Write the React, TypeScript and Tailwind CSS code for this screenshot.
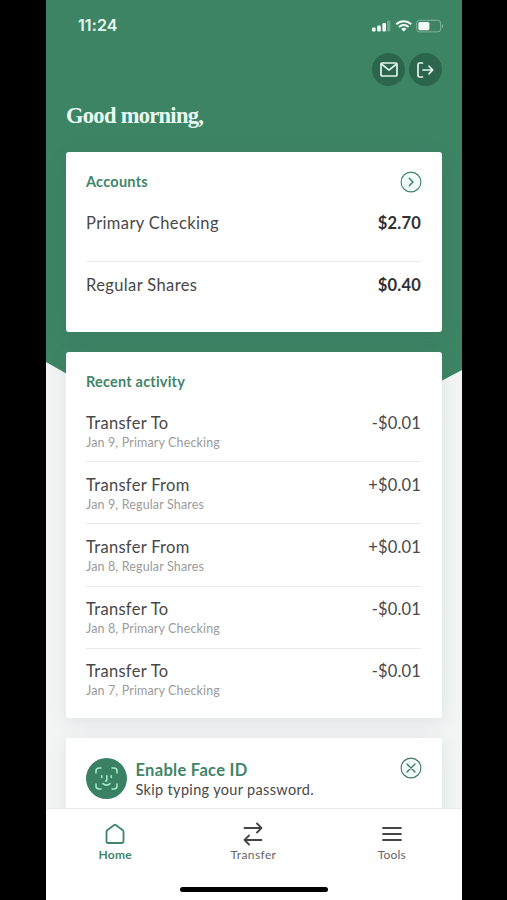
import type { ReactNode } from 'react';

const accounts = [
  { name: 'Primary Checking', balance: '$2.70' },
  { name: 'Regular Shares', balance: '$0.40' },
];

const activity = [
  { title: 'Transfer To', detail: 'Jan 9, Primary Checking', amount: '-$0.01' },
  { title: 'Transfer From', detail: 'Jan 9, Regular Shares', amount: '+$0.01' },
  { title: 'Transfer From', detail: 'Jan 8, Regular Shares', amount: '+$0.01' },
  { title: 'Transfer To', detail: 'Jan 8, Primary Checking', amount: '-$0.01' },
  { title: 'Transfer To', detail: 'Jan 7, Primary Checking', amount: '-$0.01' },
];

function StatusBar() {
  return (
    <div className="flex h-[52px] shrink-0 items-start justify-between pl-8 pr-[18px] pt-[13px]">
      <span className="font-['Inter',sans-serif] text-[16px] font-semibold leading-6 tracking-[0.1px] text-[#e6f8ee]">11:24</span>
      <svg width="74" height="16" viewBox="0 0 74 16" className="mt-[5px] text-[#f2fbf6]" fill="currentColor">
        <rect x="2" y="9.5" width="3.6" height="4" rx="1" />
        <rect x="7.2" y="7.5" width="3.6" height="6" rx="1" />
        <rect x="12.4" y="5" width="3.6" height="8.5" rx="1" />
        <rect x="17" y="2.5" width="3.4" height="11" rx="1" opacity="0.28" />
        <g fill="none" stroke="currentColor" strokeWidth="2">
          <path d="M26.3 6.2a11.2 11.2 0 0 1 15 0" />
          <path d="M29 9a7 7 0 0 1 9.6 0" />
        </g>
        <path d="M33.8 13.6l-2.6-2.7a3.9 3.9 0 0 1 5.2 0z" />
        <rect x="46.7" y="2.3" width="24" height="11.6" rx="3" fill="none" stroke="currentColor" opacity="0.38" />
        <rect x="48.4" y="4" width="11" height="8.2" rx="1.6" />
        <path d="M72 6.2c1.6.6 1.6 3.2 0 3.8z" opacity="0.45" />
      </svg>
    </div>
  );
}

function RoundButton({ children }: { children: ReactNode }) {
  return (
    <button className="flex h-[33px] w-[33px] items-center justify-center rounded-full bg-[#2b654c] text-[#e3f5ec]">
      {children}
    </button>
  );
}

function Card({ className, children }: { className: string; children: ReactNode }) {
  return (
    <section className={`rounded-[3px] bg-white pl-5 pr-[21px] shadow-[0_4px_18px_rgba(40,70,60,0.1)] ${className}`}>
      {children}
    </section>
  );
}

function Tab({ label, className, children }: { label: string; className: string; children: ReactNode }) {
  return (
    <a className={`flex flex-1 flex-col items-center ${className}`}>
      {children}
      <span className="mt-[2px] leading-4">{label}</span>
    </a>
  );
}

export default function App() {
  return (
    <div className="flex h-[900px] w-[507px] overflow-hidden bg-black pl-[46px] font-['Lato',sans-serif] text-[#484848]">
      <div className="relative flex w-[416px] flex-col overflow-hidden bg-[#f3f5f5]">
        <div className="absolute inset-x-0 top-0 h-[480px] bg-[#3d8465] [clip-path:polygon(0_0,100%_0,100%_370px,50%_480px,0_362px)]" />

        <div className="relative flex min-h-0 flex-1 flex-col">
          <StatusBar />

          <header className="shrink-0 px-5">
            <div className="flex justify-end gap-1 pt-px">
              <RoundButton>
                <svg width="18" height="15" viewBox="0 0 18 15" fill="none" stroke="currentColor" strokeWidth="1.7" strokeLinejoin="round">
                  <rect x="1" y="1" width="16" height="13" rx="1" />
                  <path d="M1.5 2L9 8.2L16.5 2" />
                </svg>
              </RoundButton>
              <RoundButton>
                <svg width="17" height="16" viewBox="0 0 17 16" fill="none" stroke="currentColor" strokeWidth="1.7" strokeLinecap="round" strokeLinejoin="round">
                  <path d="M5.5 1H2.5Q1 1 1 2.5V13.5Q1 15 2.5 15H5.5" />
                  <path d="M6 8H15.5M12 4.2L15.7 8L12 11.8" />
                </svg>
              </RoundButton>
            </div>
            <h1 className="mt-[15px] font-['Liberation_Serif',serif] text-[22.5px] font-bold leading-[30px] tracking-[-0.7px] text-[#e8faf1]">
              Good morning,
            </h1>
          </header>

          <main className="mt-[21px] flex flex-col gap-5 px-5">
            <Card className="h-[180px] shrink-0 pt-[18px]">
              <div className="flex items-center justify-between">
                <h2 className="text-[14.5px] font-bold leading-6 tracking-[0.25px] text-[#3f8568]">Accounts</h2>
                <svg width="22" height="22" viewBox="0 0 22 22" fill="none" stroke="#3f8568" className="-mr-px" strokeLinecap="round" strokeLinejoin="round">
                  <circle cx="11" cy="11" r="9.9" fill="#f1fbf7" strokeWidth="1.1" />
                  <path d="M9.3 7.2L13 11L9.3 14.8" strokeWidth="1.5" />
                </svg>
              </div>
              <div className="divide-y divide-[#ebebeb]">
                {accounts.map((a) => (
                  <div key={a.name} className="flex h-[62px] justify-between pt-[11px] text-[16.5px] leading-6 first:h-[68px] first:pt-[17px]">
                    <span className="tracking-[0.38px]">{a.name}</span>
                    <span className="font-bold tracking-[0.2px] text-[#303030]">{a.balance}</span>
                  </div>
                ))}
              </div>
            </Card>

            <Card className="h-[366px] shrink-0 pt-[18px]">
              <h2 className="text-[14.5px] font-bold leading-6 tracking-[0.2px] text-[#3f8568]">Recent activity</h2>
              <ul className="mt-[6px] divide-y divide-[#e9e9e9]">
                {activity.map((t, i) => (
                  <li key={i} className="flex h-[62.2px] justify-between pt-[10.6px] text-[16.5px] leading-6">
                    <div>
                      <p className="tracking-[0.3px]">{t.title}</p>
                      <p className="text-[12.5px] leading-[15px] tracking-[0.14px] text-[#9b9b9b]">{t.detail}</p>
                    </div>
                    <span className="tracking-[0.15px]">{t.amount}</span>
                  </li>
                ))}
              </ul>
            </Card>

            <Card className="flex h-[110px] shrink-0 pt-5">
              <svg width="41" height="41" viewBox="0 0 41 41" fill="none" stroke="#a9ebcf" strokeWidth="1.5" strokeLinecap="round">
                <circle cx="20.5" cy="20.5" r="20.5" fill="#3a8062" stroke="none" />
                <path d="M10 15V13Q10 10 13 10H15M26 10H28Q31 10 31 13V15M31 26V28Q31 31 28 31H26M15 31H13Q10 31 10 28V26" />
                <path d="M15.7 17.8V19.6M25.2 17.8V19.6M20.8 17.8V22.2Q20.8 23 19.5 23M17 25.6Q20.5 28.6 24 25.6" />
              </svg>
              <div className="ml-[8.5px] flex-1">
                <p className="mt-[2px] text-[16.5px] font-bold leading-5 tracking-[0.3px] text-[#3f8568]">Enable Face ID</p>
                <p className="text-[14.5px] leading-[19px] tracking-[0.33px]">Skip typing your password.</p>
              </div>
              <svg width="22" height="22" viewBox="0 0 22 22" fill="none" stroke="#3f7561" className="-mr-px -mt-px" strokeLinecap="round">
                <circle cx="11" cy="11" r="9.9" fill="#f1fbf7" strokeWidth="1.1" />
                <path d="M7 7L15 15M15 7L7 15" strokeWidth="1.3" />
              </svg>
            </Card>
          </main>
        </div>

        <nav className="relative flex h-[92px] shrink-0 border-t border-[#e8eaea] bg-white pr-px pt-[14px] text-[12px]">
          <Tab label="Home" className="font-bold tracking-[0.2px] text-[#3f8568]">
            <svg width="22" height="22" viewBox="0 0 22 22" fill="none" stroke="currentColor" strokeWidth="1.8" strokeLinejoin="round">
              <path d="M2.5 8.6Q2.5 7.8 3.2 7.2L10.2 2Q11 1.4 11.8 2L18.8 7.2Q19.5 7.8 19.5 8.6V18.5Q19.5 20 18 20H4Q2.5 20 2.5 18.5Z" />
            </svg>
          </Tab>
          <Tab label="Transfer" className="tracking-[0.4px] text-[#666]">
            <svg width="22" height="22" viewBox="0 0 22 22" fill="none" stroke="#454545" strokeWidth="1.8" strokeLinecap="round" strokeLinejoin="round" className="overflow-visible">
              <path d="M2.5 5H19.5M15 0.5L19.5 5L15 9.5" />
              <path d="M19.5 17H2.5M7 12.5L2.5 17L7 21.5" />
            </svg>
          </Tab>
          <Tab label="Tools" className="tracking-[0.2px] text-[#666]">
            <svg width="22" height="22" viewBox="0 0 22 22" stroke="#454545" strokeWidth="1.8" strokeLinecap="round">
              <path d="M2 5H20M2 11H20M2 17H20" />
            </svg>
          </Tab>
          <div className="absolute bottom-[8px] left-[134px] h-[5px] w-[148px] rounded-full bg-black" />
        </nav>
      </div>
    </div>
  );
}
